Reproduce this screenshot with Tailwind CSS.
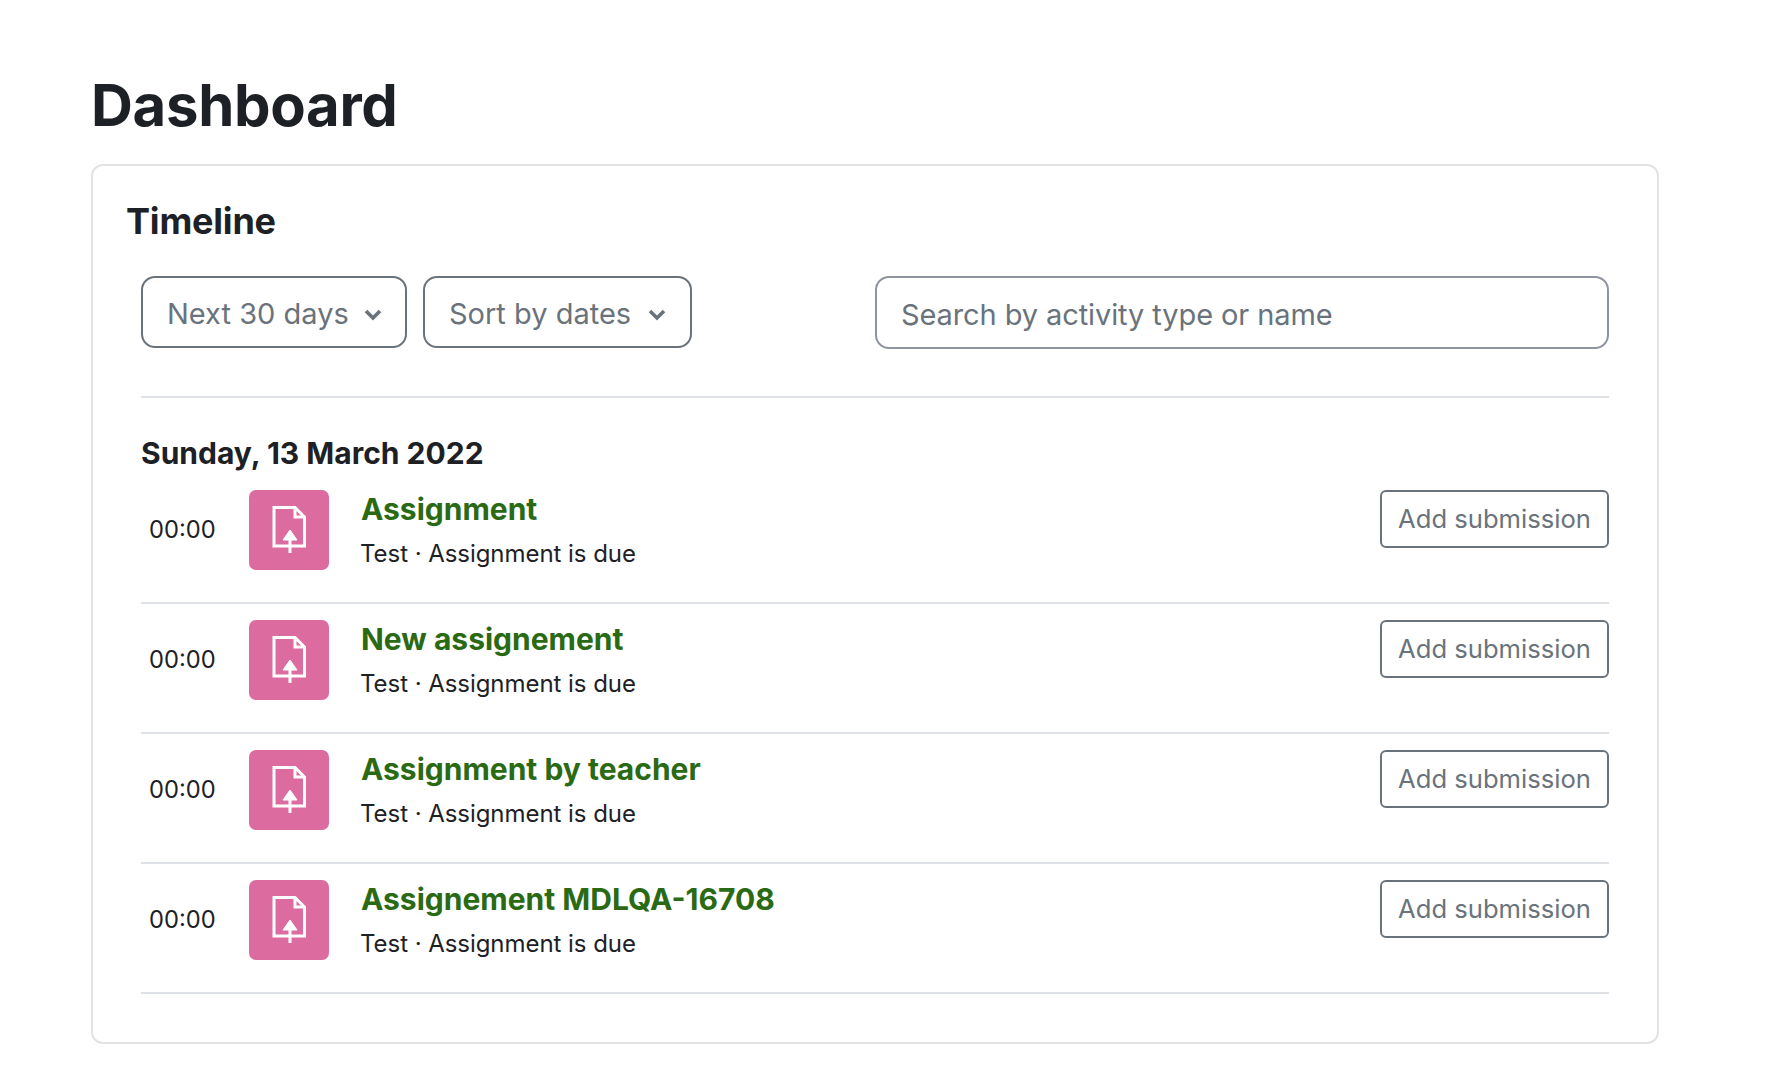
<!DOCTYPE html>
<html lang="en">
<head>
  <meta charset="UTF-8" />
  <title>Dashboard</title>
  <script src="https://cdn.jsdelivr.net/npm/@tailwindcss/browser@4"></script>
</head>
<body class="bg-white text-[#1d2125] font-['Inter',sans-serif]">
  <div class="pl-[91px] pt-[70px] w-[1659px]">
    <h1 class="text-[58px] leading-[70px] font-bold tracking-[-0.3px] mb-[24px]">Dashboard</h1>

    <section class="h-[880px] border-2 border-[#e1e3e5] rounded-[12px] pt-[34px] pl-[33px] pr-[48px]">
      <h2 class="text-[36px] leading-[42px] font-bold tracking-[-0.2px]">Timeline</h2>

      <div class="ml-[15px] mt-[34px]">
        <div class="flex items-start pb-[47px] border-b-2 border-[#dee2e6]">
          <button class="w-[266px] h-[72px] border-2 border-[#6a737b] rounded-[14px] flex items-center pl-[24px] pt-[3px] text-[#6a737b] text-[29px]">
            Next 30 days
            <svg class="ml-[15px] mt-[3px]" width="18" height="12" viewBox="0 0 18 12" fill="none" stroke="#6a737b" stroke-width="3.6"><path d="M2 2l7 7 7-7"/></svg>
          </button>
          <button class="ml-[16px] w-[269px] h-[72px] border-2 border-[#6a737b] rounded-[14px] flex items-center pl-[24px] pt-[3px] text-[#6a737b] text-[29px]">
            Sort by dates
            <svg class="ml-[17px] mt-[3px]" width="18" height="12" viewBox="0 0 18 12" fill="none" stroke="#6a737b" stroke-width="3.6"><path d="M2 2l7 7 7-7"/></svg>
          </button>
          <div class="ml-auto w-[734px] h-[73px] border-2 border-[#8f959e] rounded-[14px] flex items-center pl-[24px] pt-[5px] text-[#6a737b] text-[29px] tracking-[-0.1px]">Search by activity type or name</div>
        </div>

        <h3 class="mt-[37px] text-[30px] leading-[36px] font-bold mb-[19px]">Sunday, 13 March 2022</h3>

        <div class="flex items-start h-[114px] border-b-2 border-[#dee2e6] mb-[16px]">
          <div class="w-[108px] pl-[8px] h-[80px] flex items-center text-[23.7px]">00:00</div>
          <svg class="rounded-[7px] bg-[#dc6ca0] shrink-0" width="80" height="80" viewBox="0 0 80 80" fill="none" stroke="#fff" stroke-width="3"><path d="M41 56H25V17.5H46L55.5 27V56H41"/><path d="M46 17.5V27H55.5"/><path d="M41 63V48"/><path fill="#fff" stroke-width="1" d="M41 40L48 50H34Z"/></svg>
          <div class="ml-[31px]">
            <div class="text-[30px] leading-[38px] font-bold text-[#2b6a14] ml-px">Assignment</div>
            <div class="mt-[11px] text-[24px] leading-[30px] tracking-[-0.05px]">Test · Assignment is due</div>
          </div>
          <button class="ml-auto w-[229px] h-[58px] border-2 border-[#6a737b] rounded-[6px] text-[#6a737b] text-[25.6px]">Add submission</button>
        </div>

        <div class="flex items-start h-[114px] border-b-2 border-[#dee2e6] mb-[16px]">
          <div class="w-[108px] pl-[8px] h-[80px] flex items-center text-[23.7px]">00:00</div>
          <svg class="rounded-[7px] bg-[#dc6ca0] shrink-0" width="80" height="80" viewBox="0 0 80 80" fill="none" stroke="#fff" stroke-width="3"><path d="M41 56H25V17.5H46L55.5 27V56H41"/><path d="M46 17.5V27H55.5"/><path d="M41 63V48"/><path fill="#fff" stroke-width="1" d="M41 40L48 50H34Z"/></svg>
          <div class="ml-[31px]">
            <div class="text-[30px] leading-[38px] font-bold text-[#2b6a14] ml-px">New assignement</div>
            <div class="mt-[11px] text-[24px] leading-[30px] tracking-[-0.05px]">Test · Assignment is due</div>
          </div>
          <button class="ml-auto w-[229px] h-[58px] border-2 border-[#6a737b] rounded-[6px] text-[#6a737b] text-[25.6px]">Add submission</button>
        </div>

        <div class="flex items-start h-[114px] border-b-2 border-[#dee2e6] mb-[16px]">
          <div class="w-[108px] pl-[8px] h-[80px] flex items-center text-[23.7px]">00:00</div>
          <svg class="rounded-[7px] bg-[#dc6ca0] shrink-0" width="80" height="80" viewBox="0 0 80 80" fill="none" stroke="#fff" stroke-width="3"><path d="M41 56H25V17.5H46L55.5 27V56H41"/><path d="M46 17.5V27H55.5"/><path d="M41 63V48"/><path fill="#fff" stroke-width="1" d="M41 40L48 50H34Z"/></svg>
          <div class="ml-[31px]">
            <div class="text-[30px] leading-[38px] font-bold text-[#2b6a14] ml-px">Assignment by teacher</div>
            <div class="mt-[11px] text-[24px] leading-[30px] tracking-[-0.05px]">Test · Assignment is due</div>
          </div>
          <button class="ml-auto w-[229px] h-[58px] border-2 border-[#6a737b] rounded-[6px] text-[#6a737b] text-[25.6px]">Add submission</button>
        </div>

        <div class="flex items-start h-[114px] border-b-2 border-[#dee2e6]">
          <div class="w-[108px] pl-[8px] h-[80px] flex items-center text-[23.7px]">00:00</div>
          <svg class="rounded-[7px] bg-[#dc6ca0] shrink-0" width="80" height="80" viewBox="0 0 80 80" fill="none" stroke="#fff" stroke-width="3"><path d="M41 56H25V17.5H46L55.5 27V56H41"/><path d="M46 17.5V27H55.5"/><path d="M41 63V48"/><path fill="#fff" stroke-width="1" d="M41 40L48 50H34Z"/></svg>
          <div class="ml-[31px]">
            <div class="text-[30px] leading-[38px] font-bold text-[#2b6a14] ml-px">Assignement MDLQA-16708</div>
            <div class="mt-[11px] text-[24px] leading-[30px] tracking-[-0.05px]">Test · Assignment is due</div>
          </div>
          <button class="ml-auto w-[229px] h-[58px] border-2 border-[#6a737b] rounded-[6px] text-[#6a737b] text-[25.6px]">Add submission</button>
        </div>
      </div>
    </section>
  </div>
</body>
</html>
